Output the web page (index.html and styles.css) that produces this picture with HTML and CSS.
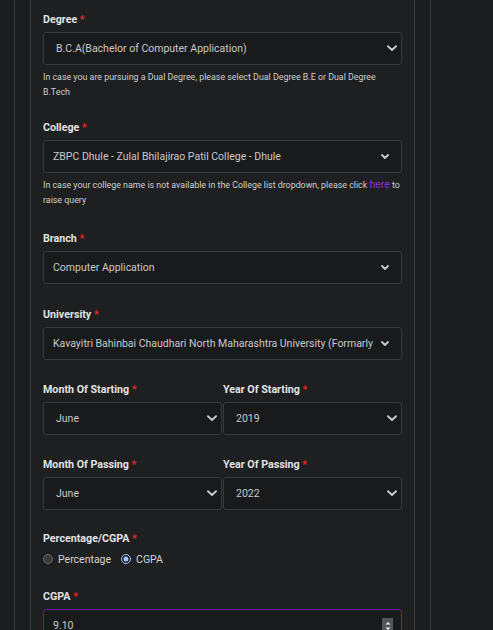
FILE: index.html
```html
<!DOCTYPE html>
<html>
<head>
<meta charset="utf-8">
<link rel="stylesheet" href="styles.css">
</head>
<body>
<div class="frame">
  <div class="card">
    <div class="field with-hint">
      <div class="label">Degree <span class="req">*</span></div>
      <div class="select native">
        <span class="val">B.C.A(Bachelor of Computer Application)</span>
        <svg class="chev big" viewBox="0 0 10 7"><path d="M1 1.2 L5 5 L9 1.2" /></svg>
      </div>
      <div class="hint">In case you are pursuing a Dual Degree, please select Dual Degree B.E or Dual Degree B.Tech</div>
    </div>

    <div class="field with-hint college">
      <div class="label">College <span class="req">*</span></div>
      <div class="select custom">
        <span class="val">ZBPC Dhule - Zulal Bhilajirao Patil College - Dhule</span>
        <svg class="chev small" viewBox="0 0 8 5"><path d="M1 1 L4 4 L7 1" /></svg>
      </div>
      <div class="hint">In case your college name is not available in the College list dropdown, please click <a class="link">here</a> to raise query</div>
    </div>

    <div class="field branch">
      <div class="label">Branch <span class="req">*</span></div>
      <div class="select custom">
        <span class="val">Computer Application</span>
        <svg class="chev small" viewBox="0 0 8 5"><path d="M1 1 L4 4 L7 1" /></svg>
      </div>
    </div>

    <div class="field">
      <div class="label">University <span class="req">*</span></div>
      <div class="select custom">
        <span class="val">Kavayitri Bahinbai Chaudhari North Maharashtra University (Formarly</span>
        <svg class="chev small" viewBox="0 0 8 5"><path d="M1 1 L4 4 L7 1" /></svg>
      </div>
    </div>

    <div class="field pair">
      <div class="col">
        <div class="label">Month Of Starting <span class="req">*</span></div>
        <div class="select native">
          <span class="val">June</span>
          <svg class="chev big" viewBox="0 0 10 7"><path d="M1 1.2 L5 5 L9 1.2" /></svg>
        </div>
      </div>
      <div class="col">
        <div class="label">Year Of Starting <span class="req">*</span></div>
        <div class="select native">
          <span class="val">2019</span>
          <svg class="chev big" viewBox="0 0 10 7"><path d="M1 1.2 L5 5 L9 1.2" /></svg>
        </div>
      </div>
    </div>

    <div class="field pair passing">
      <div class="col">
        <div class="label">Month Of Passing <span class="req">*</span></div>
        <div class="select native">
          <span class="val">June</span>
          <svg class="chev big" viewBox="0 0 10 7"><path d="M1 1.2 L5 5 L9 1.2" /></svg>
        </div>
      </div>
      <div class="col">
        <div class="label">Year Of Passing <span class="req">*</span></div>
        <div class="select native">
          <span class="val">2022</span>
          <svg class="chev big" viewBox="0 0 10 7"><path d="M1 1.2 L5 5 L9 1.2" /></svg>
        </div>
      </div>
    </div>

    <div class="field radio-field">
      <div class="label">Percentage/CGPA <span class="req">*</span></div>
      <div class="radios">
        <label class="radio"><span class="dot"></span>Percentage</label>
        <label class="radio on"><span class="dot"></span>CGPA</label>
      </div>
    </div>

    <div class="field">
      <div class="label">CGPA <span class="req">*</span></div>
      <div class="select number">
        <span class="val">9.10</span>
        <span class="spin">
          <svg viewBox="0 0 8 12"><path d="M1.5 4.5 L4 2 L6.5 4.5 Z M1.5 7.5 L4 10 L6.5 7.5 Z" /></svg>
        </span>
      </div>
    </div>
  </div>
</div>
</body>
</html>
```

FILE: styles.css
```css
* { box-sizing: border-box; }
html, body {
  margin: 0;
  padding: 0;
  background: #1c1d1f;
  font-family: Roboto, "Liberation Sans", Arial, sans-serif;
  color: #d0d0d0;
  overflow: hidden;
}
.frame {
  margin-left: 14px;
  width: 417px;
  min-height: 700px;
  border-left: 1px solid #3a3b3e;
  border-right: 1px solid #3a3b3e;
  padding: 0 15px;
}
.card {
  width: 385px;
  min-height: 700px;
  border-left: 1px solid #3a3b3e;
  border-right: 1px solid #3a3b3e;
  padding: 13px 12px 0 12px;
  background: #1e1f21;
}
.field {
  margin-bottom: 23px;
}
.field.with-hint {
  margin-bottom: 21px;
}
.field.college { margin-bottom: 24px; }
.field.branch { margin-bottom: 24px; }
.field.passing { margin-bottom: 22px; }
.field.radio-field { margin-bottom: 23px; }
.label {
  font-size: 10.7px;
  font-weight: 700;
  line-height: 14px;
  color: #e2e2e2;
  margin-bottom: 5px;
  white-space: nowrap;
}
.req { color: #e3262b; }
.select {
  height: 33px;
  border: 1px solid #38393c;
  border-radius: 3px;
  background: #191a1c;
  display: flex;
  align-items: center;
  font-size: 10.5px;
  color: #c9c9c9;
}
.select .val {
  flex: 1;
  white-space: nowrap;
  overflow: hidden;
  text-overflow: clip;
}
.native { padding: 0 4px 0 12px; }
.custom { padding: 0 12px 0 9px; }
.chev {
  fill: none;
  stroke: #c9c9c9;
  stroke-linecap: round;
  stroke-linejoin: round;
  flex: none;
}
.chev.big { width: 10px; height: 7px; stroke-width: 1.9; margin-left: 6px; }
.chev.small { width: 8px; height: 5px; stroke-width: 1.8; margin-left: 8px; }
.hint {
  margin-top: 5px;
  font-size: 8.85px;
  line-height: 15px;
  color: #cfcfcf;
}
.link {
  color: #8a2be2;
  font-size: 10.5px;
  line-height: 12px;
}
.pair {
  display: grid;
  grid-template-columns: 1fr 1fr;
  column-gap: 1px;
}
.radios {
  display: flex;
  align-items: center;
  gap: 10px;
  height: 16px;
  margin-top: 0;
}
.radio {
  display: flex;
  align-items: center;
  font-size: 10.5px;
  color: #d4d4d4;
}
.dot {
  width: 10px;
  height: 10px;
  border-radius: 50%;
  border: 1px solid #6b6b6b;
  background: #3a3a3a;
  margin-right: 5px;
  flex: none;
}
.radio.on .dot {
  border: 1px solid #9ec8ff;
  background: #9ec8ff;
  box-shadow: inset 0 0 0 1.5px #1e1f21;
  background-clip: content-box;
  padding: 1px;
}
.number {
  border-color: #6a1aa3;
  padding: 0 8px 0 9px;
}
.spin {
  width: 11px;
  height: 16px;
  background: #555658;
  display: flex;
  align-items: center;
  justify-content: center;
}
.spin svg { width: 8px; height: 12px; fill: #f0f0f0; }
```
